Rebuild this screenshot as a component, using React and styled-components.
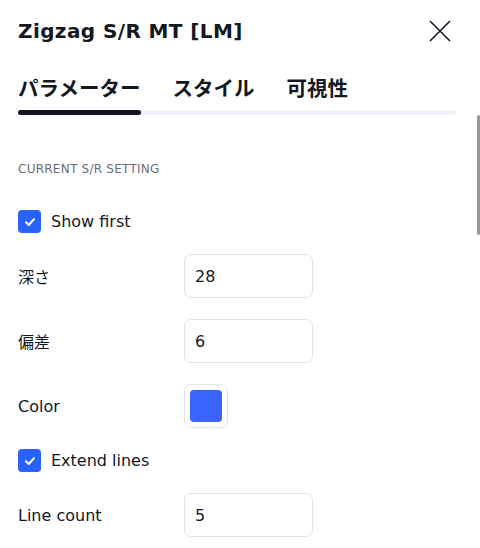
import styled, { createGlobalStyle } from "styled-components";

const GlobalStyle = createGlobalStyle`
  html, body {
    margin: 0;
    padding: 0;
    background: #ffffff;
  }
  body {
    font-family: "DejaVu Sans", "Noto Sans CJK JP", sans-serif;
    color: #131722;
  }
`;

const tabs = ["パラメーター", "スタイル", "可視性"];

export default function App() {
  return (
    <>
      <GlobalStyle />
      <Dialog>
        <Header>
          <Title>Zigzag S/R MT [LM]</Title>
          <CloseButton aria-label="close">
            <svg width="22" height="22" viewBox="0 0 22 22">
              <path d="M1 1 L21 21 M21 1 L1 21" stroke="#131722" strokeWidth="1.6" fill="none" />
            </svg>
          </CloseButton>
        </Header>
        <TabBar>
          {tabs.map((t, i) => (
            <Tab key={t} $active={i === 0}>{t}</Tab>
          ))}
        </TabBar>
        <TabTrack>
          <TabIndicator />
        </TabTrack>
        <Body>
          <Scrollbar />
          <SectionTitle>CURRENT S/R SETTING</SectionTitle>
          <Rows>
            <CheckRow>
              <Checkbox><CheckMark /></Checkbox>
              <CheckLabel>Show first</CheckLabel>
            </CheckRow>
            <FieldRow>
              <Label>深さ</Label>
              <Input defaultValue="28" />
            </FieldRow>
            <FieldRow>
              <Label>偏差</Label>
              <Input defaultValue="6" />
            </FieldRow>
            <FieldRow>
              <Label>Color</Label>
              <Swatch>
                <SwatchFill $color="#3a63ff" />
              </Swatch>
            </FieldRow>
            <CheckRow>
              <Checkbox><CheckMark /></Checkbox>
              <CheckLabel>Extend lines</CheckLabel>
            </CheckRow>
            <FieldRow>
              <Label>Line count</Label>
              <Input defaultValue="5" />
            </FieldRow>
          </Rows>
        </Body>
      </Dialog>
    </>
  );
}

function CheckMark() {
  return (
    <svg width="14" height="14" viewBox="0 0 14 14">
      <path d="M3 7.2 L5.8 10 L11 4.2" stroke="#fff" strokeWidth="2" fill="none" strokeLinecap="round" strokeLinejoin="round" />
    </svg>
  );
}

const Dialog = styled.div`
  width: 480px;
  height: 548px;
  overflow: hidden;
  position: relative;
  background: #fff;
`;

const Header = styled.div`
  display: flex;
  align-items: center;
  justify-content: space-between;
  padding: 15px 29px 0 18px;
  height: 32px;
`;

const Title = styled.h1`
  margin: 0;
  font-size: 20px;
  font-weight: 700;
  letter-spacing: 0.4px;
  color: #131722;
`;

const CloseButton = styled.button`
  border: none;
  background: none;
  padding: 0;
  display: flex;
  cursor: pointer;
`;

const TabBar = styled.div`
  display: flex;
  gap: 32px;
  padding: 29px 18px 0;
`;

const Tab = styled.div`
  font-size: 20.5px;
  font-weight: 700;
  line-height: 26px;
  color: ${(p) => (p.$active ? "#131722" : "#131722")};
`;

const TabTrack = styled.div`
  margin: 8px 24px 0 18px;
  height: 5px;
  border-radius: 3px;
  background: #f0f3fa;
`;

const TabIndicator = styled.div`
  width: 123px;
  height: 5px;
  border-radius: 3px;
  background: #131722;
`;

const Body = styled.div`
  position: relative;
  padding: 0 18px;
`;

const Scrollbar = styled.div`
  position: absolute;
  right: 0;
  top: 0;
  width: 3px;
  height: 120px;
  background: #9598a1;
  border-radius: 2px;
`;

const SectionTitle = styled.div`
  padding-top: 46px;
  font-size: 12px;
  line-height: 16px;
  letter-spacing: 0.25px;
  color: #6a6d78;
`;

const Rows = styled.div`
  display: flex;
  flex-direction: column;
  gap: 21px;
  padding-top: 33px;
`;

const CheckRow = styled.label`
  display: flex;
  align-items: center;
  gap: 10px;
  height: 23px;
`;

const Checkbox = styled.span`
  width: 23px;
  height: 23px;
  border-radius: 4px;
  background: #2962ff;
  display: flex;
  align-items: center;
  justify-content: center;
`;

const CheckLabel = styled.span`
  font-size: 16px;
  color: #131722;
`;

const FieldRow = styled.div`
  display: flex;
  align-items: center;
  height: 44px;
`;

const Label = styled.div`
  width: 166px;
  font-size: 16px;
  color: #131722;
`;

const Input = styled.input`
  box-sizing: border-box;
  width: 129px;
  height: 44px;
  border: 1px solid #e0e3eb;
  border-radius: 7px;
  padding: 0 10px;
  font-family: inherit;
  font-size: 16px;
  color: #131722;
  outline: none;
`;

const Swatch = styled.div`
  box-sizing: border-box;
  width: 44px;
  height: 44px;
  border: 1px solid #e0e3eb;
  border-radius: 7px;
  display: flex;
  align-items: center;
  justify-content: center;
`;

const SwatchFill = styled.div`
  width: 32px;
  height: 32px;
  border-radius: 4px;
  background: ${(p) => p.$color};
`;
